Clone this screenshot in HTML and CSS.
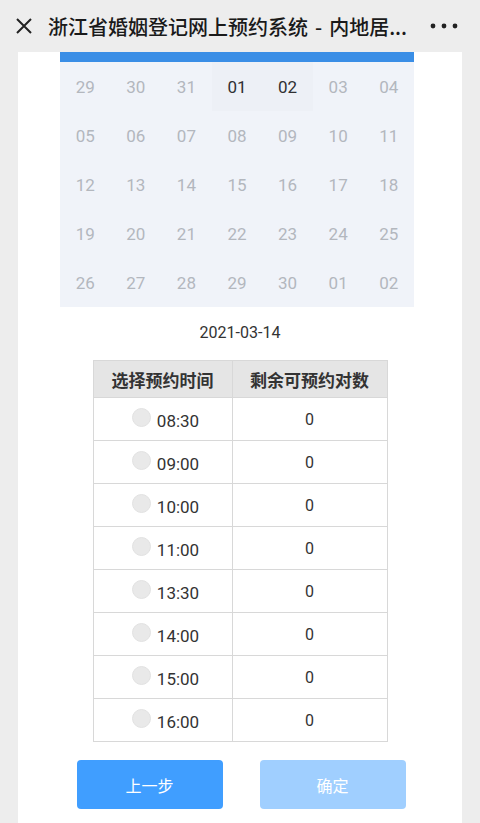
FILE: index.html
```html
<!DOCTYPE html>
<html lang="zh-CN">
<head>
<meta charset="UTF-8" />
<meta name="viewport" content="width=device-width, initial-scale=1" />
<title>浙江省婚姻登记网上预约系统 - 内地居民婚姻登记</title>
<link rel="stylesheet" href="styles.css">
</head>
<body>
<header class="topbar">
  <svg class="close-icon" width="18" height="18" viewBox="0 0 18 18" aria-hidden="true">
    <path d="M2 2 L16 16 M16 2 L2 16" stroke="#222" stroke-width="2" fill="none" />
  </svg>
  <div class="title">浙江省婚姻登记网上预约系统<span class="dash">-</span>内地居...</div>
  <svg class="more-icon" width="28" height="6" viewBox="0 0 28 6" aria-hidden="true">
    <circle cx="3" cy="3" r="2.4" fill="#222" />
    <circle cx="14" cy="3" r="2.4" fill="#222" />
    <circle cx="25" cy="3" r="2.4" fill="#222" />
  </svg>
</header>

<main class="page">
  <div class="card">
    <div class="calendar">
      <div class="cal-bar"></div>
      <div class="cal-grid">
        <span class="day">29</span><span class="day">30</span><span class="day">31</span>
        <span class="day active">01</span><span class="day active">02</span>
        <span class="day">03</span><span class="day">04</span>
        <span class="day">05</span><span class="day">06</span><span class="day">07</span><span class="day">08</span><span class="day">09</span><span class="day">10</span><span class="day">11</span>
        <span class="day">12</span><span class="day">13</span><span class="day">14</span><span class="day">15</span><span class="day">16</span><span class="day">17</span><span class="day">18</span>
        <span class="day">19</span><span class="day">20</span><span class="day">21</span><span class="day">22</span><span class="day">23</span><span class="day">24</span><span class="day">25</span>
        <span class="day">26</span><span class="day">27</span><span class="day">28</span><span class="day">29</span><span class="day">30</span><span class="day">01</span><span class="day">02</span>
      </div>
    </div>

    <div class="date">2021-03-14</div>

    <table class="slots">
      <thead>
        <tr><th class="col-time">选择预约时间</th><th>剩余可预约对数</th></tr>
      </thead>
      <tbody>
        <tr><td><label class="slot"><input type="radio" name="time" disabled>08:30</label></td><td>0</td></tr>
        <tr><td><label class="slot"><input type="radio" name="time" disabled>09:00</label></td><td>0</td></tr>
        <tr><td><label class="slot"><input type="radio" name="time" disabled>10:00</label></td><td>0</td></tr>
        <tr><td><label class="slot"><input type="radio" name="time" disabled>11:00</label></td><td>0</td></tr>
        <tr><td><label class="slot"><input type="radio" name="time" disabled>13:30</label></td><td>0</td></tr>
        <tr><td><label class="slot"><input type="radio" name="time" disabled>14:00</label></td><td>0</td></tr>
        <tr><td><label class="slot"><input type="radio" name="time" disabled>15:00</label></td><td>0</td></tr>
        <tr><td><label class="slot"><input type="radio" name="time" disabled>16:00</label></td><td>0</td></tr>
      </tbody>
    </table>

    <div class="actions">
      <button class="btn btn-primary" type="button">上一步</button>
      <button class="btn btn-disabled" type="button" disabled>确定</button>
    </div>
  </div>
</main>
</body>
</html>
```

FILE: styles.css
```css
/* базовое */
body {
  margin: 0;
  background: #ededed;
  font-family: Roboto, "Noto Sans CJK SC", sans-serif;
  color: #303133;
}

/* шапка webview */
.topbar {
  height: 52px;
  background: #ededed;
  display: flex;
  align-items: center;
  padding: 0 22px 0 15px;
}
.close-icon {
  flex: none;
  margin-right: 15px;
}
.title {
  flex: 1;
  min-width: 0;
  font-family: "Noto Sans CJK SC", sans-serif;
  font-size: 20px;
  font-weight: 500;
  color: #1a1a1a;
  white-space: nowrap;
}
.dash {
  margin: 0 7px;
}
.more-icon {
  flex: none;
}

/* страница */
.page {
  padding: 0 18px;
}
.card {
  background: #fff;
  padding-bottom: 20px;
}

/* календарь */
.calendar {
  width: 354px;
  margin-left: 42px;
  background: #f0f3f9;
}
.cal-bar {
  height: 10px;
  background: #3a8ee6;
}
.cal-grid {
  display: grid;
  grid-template-columns: repeat(7, 1fr);
  grid-auto-rows: 49px;
}
.day {
  display: flex;
  align-items: center;
  justify-content: center;
  font-size: 17px;
  color: #b3b7be;
}
.day.active {
  color: #303133;
  background: #edf0f6;
}

.date {
  text-align: center;
  font-size: 16px;
  line-height: 24px;
  color: #333;
  margin-top: 14px;
}

/* таблица времени */
.slots {
  width: 295px;
  margin: 15px auto 0;
  border-collapse: collapse;
  table-layout: fixed;
}
.slots th,
.slots td {
  border: 1px solid #d8d8d8;
  text-align: center;
  padding: 0;
}
.slots th {
  height: 36px;
  background: #e5e5e5;
  font-family: "Noto Sans CJK SC", sans-serif;
  font-size: 17px;
  font-weight: 700;
  color: #333;
}
.slots th.col-time {
  width: 138px;
}
.slots td {
  height: 42px;
  font-size: 16px;
  color: #333;
}
.slot {
  display: inline-flex;
  align-items: center;
  font-size: 17px;
  color: #333;
  padding: 4px 0 0 6px;
}
.slot input {
  appearance: none;
  -webkit-appearance: none;
  width: 19px;
  height: 19px;
  margin: 0 6px 7px 0;
  border-radius: 50%;
  background: #e9e9e9;
  border: 1px solid #e2e2e2;
}

/* кнопки */
.actions {
  display: flex;
  justify-content: center;
  gap: 37px;
  margin-top: 18px;
  padding-left: 2px;
}
.btn {
  width: 146px;
  height: 49px;
  border: none;
  border-radius: 4px;
  font-family: "Noto Sans CJK SC", sans-serif;
  font-size: 16px;
  color: #fff;
}
.btn-primary {
  background: #409eff;
}
.btn-disabled {
  background: #a0cfff;
}
```
